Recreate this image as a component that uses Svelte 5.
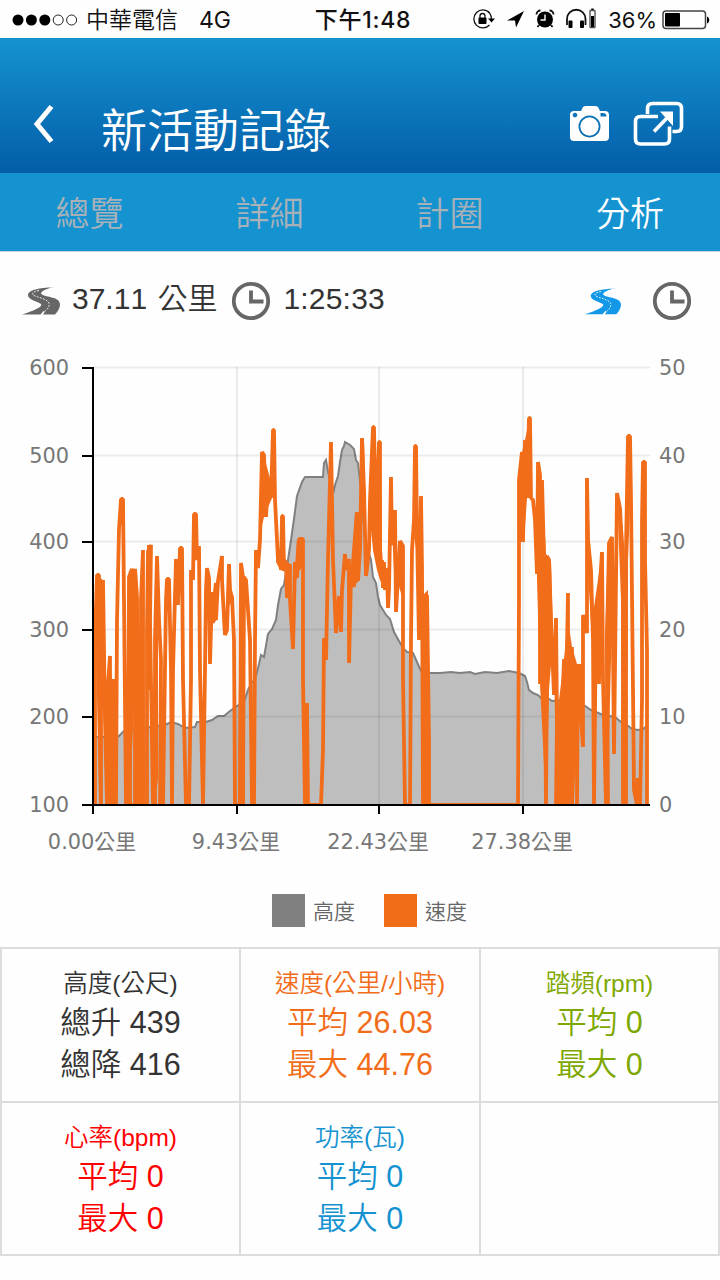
<script lang="ts">
	interface Stat {
		title: string;
		lines: string[];
		tone: string;
	}

	const tabs = ['總覽', '詳細', '計圈', '分析'];
	let active = $state('分析');
	let axisMode = $state('distance');

	const stats: Stat[] = [
		{title: '高度(公尺)', lines: ['總升 439', '總降 416'], tone: 'altitude'},
		{title: '速度(公里/小時)', lines: ['平均 26.03', '最大 44.76'], tone: 'speed'},
		{title: '踏頻(rpm)', lines: ['平均 0', '最大 0'], tone: 'cadence'},
		{title: '心率(bpm)', lines: ['平均 0', '最大 0'], tone: 'heart'},
		{title: '功率(瓦)', lines: ['平均 0', '最大 0'], tone: 'power'},
		{title: '', lines: [], tone: 'empty'}
	];

	const rows = [
		{y: 368, left: '600', right: '50'},
		{y: 456, left: '500', right: '40'},
		{y: 542, left: '400', right: '30'},
		{y: 630, left: '300', right: '20'},
		{y: 717, left: '200', right: '10'},
		{y: 805, left: '100', right: '0'}
	];
	const cols = [
		{x: 93, label: '0.00公里'},
		{x: 237, label: '9.43公里'},
		{x: 379, label: '22.43公里'},
		{x: 523, label: '27.38公里'}
	];

	const altitude = `94,737 118,737 124,731 134,729 150,727 165,725 171,722 178,724 185,728 195,727 197,722
		206,722 212,720 218,716 224,716 230,711 237,706 244,702 248,690 252,682 255,680 259,664 261,655 264,657
		268,634 272,629 276,620 278,605 281,589 284,585 288,560 291,540 294,519 297,496 302,482 305,477 323,477
		324,463 326,460 328,472 330,480 334,490 335,485 338,476 340,462 342,450 344,446 345,442 350,445 354,449
		356,460 358,463 361,490 365,540 371,560 373,577 376,583 378,597 380,605 386,615 390,619 394,632 399,641
		403,648 407,652 413,653 417,662 421,671 430,673 440,673 451,672 460,673 470,672 475,674 485,672 497,673
		509,671 514,672 519,673 523,675 525,676 527,682 529,690 533,693 538,695 541,698 549,699 552,701 563,700
		570,702 585,706 591,710 596,712 603,715 615,717 621,722 627,725 632,729 638,730 643,729 648,725`;

	const speed = `95,805 95,640 97,575 99,575 101,805 101,640 103,580 105,720 107,805 107,700 110,656 110,805 113,679
		113,805 116,805 117,620 119,530 121,499 123,499 124,600 126,805 128,805 129,577 132,569 132,702 134,569
		130,577 130,805 135,805 135,569 137,597 138,805 141,805 141,600 143,550 143,805 147,805 147,630 148,551
		151,545 150,620 153,805 155,805 155,640 157,556 159,620 161,660 160,805 163,805 166,600 167,579 169,579
		171,670 172,805 173,670 176,559 178,605 180,548 182,548 183,680 186,805 189,805 191,680 191,570 193,580
		194,514 196,514 197,560 199,546 200,670 203,805 205,670 206,590 207,568 209,578 210,664 212,592 213,623
		216,583 216,620 218,581 222,556 222,580 225,635 227,630 229,564 230,590 232,597 234,640 235,805 240,805
		241,563 243,577 243,805 244,577 246,580 250,640 252,805 254,805 255,640 256,550 258,568 260,540 262,452
		264,455 266,517 268,479 271,498 273,430 274,430 275,500 278,560 280,549 281,570 282,516 283,516 284,570
		286,562 287,598 290,564 290,600 293,649 295,562 297,578 299,539 303,539 303,680 305,805 307,703 308,805
		321,805 323,750 324,638 326,660 328,560 331,442 333,560 336,633 339,596 341,632 342,590 345,554 346,570
		349,559 349,663 351,577 354,587 357,512 358,581 360,550 362,438 364,490 366,576 369,550 370,500 373,427
		374,427 376,550 377,500 379,442 380,442 380,570 382,560 383,588 384,562 385,590 387,568 388,608 389,590
		391,477 392,545 395,510 396,612 400,541 403,546 403,680 405,805 410,805 411,640 412,550 414,520 415,446
		416,446 417,530 419,640 421,496 422,567 423,805 426,598 427,805 427,595 429,740 429,805 518,805 519,600
		519,480 522,452 523,542 525,440 527,498 529,418 530,418 531,498 533,500 535,520 537,574 538,462 540,475
		540,684 542,480 544,560 546,805 547,670 547,556 549,560 551,620 554,695 556,618 557,720 556,805 559,720
		559,805 564,659 564,805 568,593 568,805 572,647 572,805 577,664 577,805 578,670 583,747 583,615 587,633
		587,478 588,540 591,570 593,640 594,805 596,615 599,684 600,584 602,552 603,680 606,805 608,805 607,640
		609,543 612,537 614,754 617,493 620,508 621,528 623,580 623,805 626,805 626,550 628,436 630,436 631,500
		633,690 634,790 637,805 638,778 640,805 642,700 642,522 643,462 645,462 645,560 647,650 647,805`;

	// runs where samples are packed so closely that the trace closes up
	const dense = [
		'94,620 97,575 103,580 105,640 103,690 101,640 99,805 96,640 94,660',
		'106,700 109,656 112,679 116,679 117,805 106,805',
		'128,576 137,569 138,720 134,700 130,805 128,800',
		'137,597 138,597 140,800 134,805 134,700',
		'142,552 144,552 145,805 140,805',
		'147,545 151,545 152,690 147,690',
		'157,556 158,640 158,780 154,805 154,640',
		'193,514 196,514 197,560 193,560',
		'214,583 217,583 217,620 211,625',
		'208,580 211,592 211,664 208,630',
		'220,556 223,570 223,630',
		'228,564 233,600 226,610',
		'240,563 244,580 245,805 238,805',
		'261,452 265,460 270,478 272,498 264,517 261,530',
		'277,550 290,564 290,598 286,572 280,570 276,562',
		'297,539 303,539 303,565 294,580',
		'295,562 298,562 298,578 294,580',
		'355,512 358,512 358,582 352,587 350,577',
		'360,438 364,440 366,530 369,560 368,575 365,576 363,500 361,520',
		'371,440 374,440 377,480 381,460 382,550 385,590 380,580 377,570 373,550 370,520',
		'390,477 393,510 396,510 396,612 393,550',
		'400,541 403,546 403,600 397,580',
		'413,530 415,446 418,520 418,560',
		'421,597 428,590 429,805 422,805',
		'519,478 522,452 525,440 527,430 529,418 531,450 531,498 527,498 524,542 519,542',
		'537,480 542,480 546,554 551,560 553,640 549,690 546,805 540,684 537,580',
		'554,640 557,720 559,700 564,659 568,620 572,647 577,664 583,664 582,745 578,680 575,715 571,720 568,805 556,805',
		'585,478 588,478 590,560 593,614 602,552 604,660 601,660 599,684 597,684 594,805 592,740 592,640 586,540',
		'608,543 613,537 612,620 609,740 606,805 605,640',
		'617,493 623,530 625,560 629,436 631,480 628,560 627,805 622,805 621,600',
		'638,778 641,778 640,805 636,805',
		'642,522 644,463 646,560 643,600'
	];
</script>

{#snippet road()}
	<svg class="road" viewBox="0 0 38 28">
		<path d="M31 .5C18 .5 6 3 6 8c0 5 9 6 13 9 2 3-8 7-19 10.500h18.500l3-3.500 1.500.5-2 3H33c3-3 5-7 5-10 0-8-14-7-18-10-3-2 2-5 11-7.500z" fill="currentColor" />
		<path d="M17 3.500c-7 1-8 4-4 5.500 5 2 12 3 14 7 1 3-1 6-4 8" fill="none" stroke="#fefefe" stroke-width="0.9" stroke-dasharray="1.800 1.400" />
	</svg>
{/snippet}

{#snippet clock()}
	<svg class="clock" viewBox="0 0 40 40">
		<circle cx="20" cy="20" r="17.2" />
		<path d="M20 9.500v11h12.500" />
	</svg>
{/snippet}

<div class="screen">
	<div class="status">
		<div class="carrier">
			<svg width="66" height="14" viewBox="0 0 66 14">
				{#each [0, 1, 2, 3, 4] as i}
					<circle cx={6 + i * 13.4} cy="7" r={i < 3 ? 5.5 : 5} class={i < 3 ? 'on' : 'off'} />
				{/each}
			</svg>
			<span class="name">中華電信</span>
			<span>4G</span>
		</div>
		<div class="time">下午1:48</div>
		<div class="device">
			<svg width="128" height="24" viewBox="0 0 128 24">
				<path d="M18.5 5.8A9 9 0 1 0 18.5 18" fill="none" stroke="#111" stroke-width="1.3" />
				<path d="M17 4.500A9 9 0 0 1 20.300 12" fill="none" stroke="#111" stroke-width="1.300" />
				<path d="M17 11.500h7l-3.500 4z" />
				<rect x="7.500" y="10.500" width="8" height="6.500" rx="1" />
				<path d="M9 11V9a2.500 2.500 0 0 1 5 0v2" fill="none" stroke="#111" stroke-width="1.300" />
				<path d="M36 13.500 53 4 45 20.500 44 13.500z" />
				<circle cx="74" cy="12.500" r="8" />
				<path d="M65.500 7.500a4 4 0 0 1 4-4M82.500 7.500a4 4 0 0 0-4-4M68 18l-1.500 2M80 18l1.500 2" fill="none" stroke="#111" stroke-width="1.800" />
				<path d="M74 7.500v5.500h-4.500" fill="none" stroke="#fff" stroke-width="1.400" />
				<path d="M96 18v-6a9 9 0 0 1 18.500 0v6" fill="none" stroke="#111" stroke-width="1.800" />
				<rect x="97.500" y="13.500" width="4" height="7.500" rx="1" />
				<rect x="109" y="13.500" width="4" height="7.500" rx="1" />
				<rect x="119" y="3.500" width="5" height="17" rx="0.500" fill="none" stroke="#555" stroke-width="1.400" />
				<rect x="120.300" y="1.500" width="2.400" height="1.500" />
				<rect x="120" y="9" width="3" height="11" />
			</svg>
			<span>36%</span>
			<svg width="48" height="20" viewBox="0 0 48 20">
				<rect x="1" y="1" width="42.500" height="17.500" rx="3" fill="none" stroke="#444" stroke-width="1.500" />
				<rect x="3" y="3" width="15" height="13.500" rx="1" />
				<path d="M45 6.500c3 1 3 6 0 7z" />
			</svg>
		</div>
	</div>

	<header>
		<button class="back" aria-label="返回">
			<svg width="22" height="40" viewBox="0 0 22 40"><path d="M19.500 2.500 5 20l14.500 17.500" /></svg>
		</button>
		<h1>新活動記錄</h1>
		<svg width="40" height="38" viewBox="0 0 40 38">
			<path
				fill-rule="evenodd"
				fill="#fff"
				d="M4 6h7l2-4q1-1 3-1h9q2 0 3 1l2 4h5q4 0 4 4v22q0 4-4 4H4q-4 0-4-4V10q0-4 4-4zM19.500 10.500a11 11 0 1 0 .01 0zM5 7.800a2.300 2.300 0 1 0 .01 0zM30.500 8v3.500h6q0-3.500-3.500-3.500z"
			/>
			<circle cx="19.500" cy="21.500" r="9.200" fill="#fff" />
		</svg>
		<svg class="share" width="52" height="46" viewBox="0 0 52 46">
			<path d="M14.500 13V7.500q0-5 5-5h24q5 0 5 5v18q0 5-5 5h-4" />
			<path d="M25 15.500H7.500q-5 0-5 5V38q0 5 5 5h24q5 0 5-5V25.500" />
			<path d="M21 30.500 34 17" />
			<path class="head" d="M27 10.500h13V25z" />
		</svg>
	</header>

	<nav>
		{#each tabs as tab}
			<button class:active={tab === active} onclick={() => (active = tab)}>{tab}</button>
		{/each}
	</nav>

	<div class="summary">
		{@render road()}
		<span class="distance">37.11 公里</span>
		{@render clock()}
		<span class="duration">1:25:33</span>
		<button class="mode" class:selected={axisMode === 'distance'} onclick={() => (axisMode = 'distance')} aria-label="距離">
			{@render road()}
		</button>
		<button class="mode" class:selected={axisMode === 'time'} onclick={() => (axisMode = 'time')} aria-label="時間">
			{@render clock()}
		</button>
	</div>

	<svg class="chart" width="720" height="532" viewBox="0 346 720 532">
		<clipPath id="plot"><rect x="92" y="360" width="558" height="445" /></clipPath>
		<polygon class="area" points="94,805 {altitude} 648,805" />
		<polyline class="ridge" points={altitude} />
		<g class="grid">
			{#each rows.slice(0, 5) as row}
				<path d="M94 {row.y - 0.5}H650" />
			{/each}
			{#each cols.slice(1) as col}
				<path d="M{col.x} 367V805" />
			{/each}
		</g>
		<g clip-path="url(#plot)">
			<polyline class="trace" points={speed} />
			{#each dense as run}
				<polygon class="dense" points={run} />
			{/each}
		</g>
		<g class="axis">
			<path d="M93 367V814M82 805H650" />
			{#each rows as row}
				<path d="M82 {row.y}H93" />
			{/each}
			{#each cols as col}
				<path d="M{col.x} 805V814" />
			{/each}
		</g>
		{#each rows as row}
			<text x="69" y={row.y + 7} text-anchor="end">{row.left}</text>
			<text x="659" y={row.y + 7}>{row.right}</text>
		{/each}
		{#each cols as col}
			<text x={col.x - 1} y="849" text-anchor="middle">{col.label}</text>
		{/each}
	</svg>

	<div class="legend">
		<i class="grey"></i><span>高度</span>
		<i class="orange"></i><span>速度</span>
	</div>

	<section class="stats">
		{#each stats as stat}
			<div class="cell {stat.tone}">
				<h2>{stat.title}</h2>
				{#each stat.lines as line}
					<p>{line}</p>
				{/each}
			</div>
		{/each}
	</section>
</div>

<style>
	:global(body) {
		margin: 0;
		background: #fefefe;
	}

	.screen {
		width: 720px;
		height: 1280px;
		overflow: hidden;
		font-family: 'Liberation Sans', 'Noto Sans CJK TC', sans-serif;
		font-weight: 350;
	}

	button {
		padding: 0;
		border: 0;
		background: none;
		font: inherit;
		color: inherit;
	}

	svg {
		display: block;
		flex: none;
	}

	.status {
		display: grid;
		grid-template-columns: 1fr auto 1fr;
		align-items: center;
		height: 38px;
		padding: 2px 10px 0 12px;
		box-sizing: border-box;
		font-family: Inter, 'Noto Sans CJK TC', sans-serif;
		font-size: 23px;
		font-weight: 400;
		line-height: 36px;
		color: #111;
	}

	.carrier,
	.device {
		display: flex;
		align-items: center;
	}

	.carrier .name {
		margin: 0 21px 0 8px;
		font-weight: 350;
	}

	.on {
		fill: #000;
	}

	.off {
		fill: none;
		stroke: #222;
	}

	.time {
		margin-left: 4px;
		font-weight: 500;
		letter-spacing: 0.7px;
	}

	.device {
		justify-content: flex-end;
	}

	.device svg:first-child {
		margin-top: -2px;
	}

	.device span {
		margin: 0 5px 0 9px;
		font-size: 22px;
	}

	header {
		display: flex;
		align-items: center;
		box-sizing: border-box;
		height: 135px;
		padding: 36px 35px 0 32px;
		background: linear-gradient(#1593d1, #035da8);
		color: #fff;
	}

	.back path {
		fill: none;
		stroke: #fff;
		stroke-width: 5;
	}

	h1 {
		flex: 1;
		margin: 15px 0 0 47px;
		font-size: 46px;
		font-weight: 350;
		line-height: 60px;
	}

	.share {
		margin-left: 23px;
	}

	.share path {
		fill: none;
		stroke: #fff;
		stroke-width: 3.6;
	}

	.share .head {
		fill: #fff;
		stroke: none;
	}

	nav {
		display: grid;
		grid-template-columns: repeat(4, 1fr);
		height: 78px;
		background: #1593d1;
		border-bottom: 1px solid #c8d4da;
	}

	nav button {
		padding: 0 1px 2px 0;
		font-size: 34px;
		color: #a9b1b8;
	}

	nav .active {
		padding-right: 0;
		color: #fff;
	}

	.summary {
		display: flex;
		align-items: center;
		height: 94px;
		padding: 4px 28px 0 22px;
		box-sizing: border-box;
		font-size: 30px;
		font-kerning: none;
		color: #333;
	}

	.road {
		width: 38px;
		height: 28px;
		color: #666;
	}

	.clock {
		width: 40px;
		height: 40px;
		fill: none;
		stroke: #666;
		stroke-width: 3.8;
	}

	.distance {
		margin: -10px 14px 0 12px;
		word-spacing: 2px;
	}

	.duration {
		flex: 1;
		margin: -4px 0 0 12px;
		letter-spacing: 0.2px;
	}

	.mode .road {
		width: 36px;
		height: 27px;
	}

	.mode + .mode {
		margin-left: 31px;
	}

	.mode.selected .road {
		color: #1398e8;
	}

	.area {
		fill: #bebebe;
	}

	.ridge {
		fill: none;
		stroke: #808080;
		stroke-width: 2;
	}

	.grid path {
		stroke: #000;
		stroke-opacity: 0.07;
		stroke-width: 2;
	}

	.trace {
		fill: none;
		stroke: #f26d1a;
		stroke-width: 3.8;
		stroke-linejoin: bevel;
	}

	.dense {
		fill: #f26d1a;
	}

	.axis path {
		stroke: #000;
		stroke-width: 2;
	}

	.chart text {
		font-family: 'DejaVu Sans', 'Noto Sans CJK TC', sans-serif;
		font-size: 20.9px;
		font-weight: 400;
		fill: #777;
	}

	.legend {
		display: flex;
		align-items: center;
		justify-content: center;
		height: 65px;
		padding-left: 19px;
		font-size: 21px;
		line-height: 30px;
		color: #666;
	}

	.legend span {
		margin-top: 2px;
	}

	.legend i {
		width: 33px;
		height: 33px;
		margin-right: 8px;
	}

	.legend span + i {
		margin-left: 29px;
	}

	.grey {
		background: #808080;
	}

	.orange {
		background: #f26d1a;
	}

	.stats {
		display: grid;
		grid-template-columns: 237px 238px 237px;
		grid-template-rows: 152px 151px;
		gap: 2px;
		margin-top: 4px;
		padding: 2px;
		background: #dcdcdc;
	}

	.cell {
		padding-top: 18px;
		box-sizing: border-box;
		background: #fefefe;
		text-align: center;
	}

	h2 {
		margin: 0;
		font-size: 24.5px;
		font-weight: 350;
		line-height: 34px;
	}

	p {
		margin: 0;
		font-size: 30.5px;
		line-height: 42px;
	}

	.altitude {
		color: #333;
	}

	.speed {
		color: #f26d1a;
	}

	.cadence {
		color: #7ea800;
	}

	.heart {
		color: #f00;
	}

	.power {
		color: #1593d1;
	}
</style>
